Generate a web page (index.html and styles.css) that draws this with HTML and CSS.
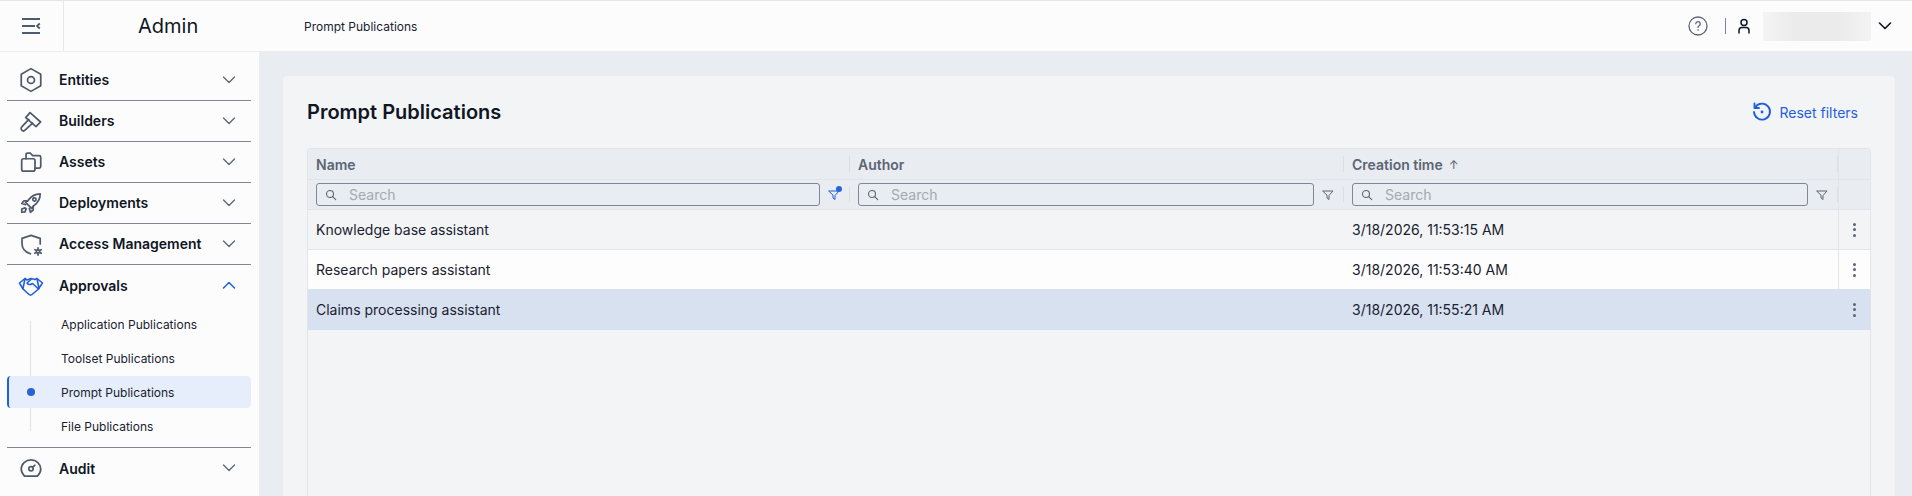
FILE: index.html
```html
<!DOCTYPE html>
<html lang="en">
<head>
<meta charset="utf-8">
<title>Prompt Publications</title>
<link rel="stylesheet" href="styles.css">
</head>
<body>
<header class="topbar">
  <div class="burger-cell">
    <svg class="ic-burger" viewBox="0 0 20 18" width="20" height="18"><path d="M1 2h18M1 9h13M1 16h18M18.800 6.500 16 9l2.800 2.500" /></svg>
  </div>
  <div class="app-name">Admin</div>
  <div class="crumb">Prompt Publications</div>
  <div class="top-right">
    <svg class="ic-help" viewBox="0 0 20 20" width="20" height="20"><circle cx="10" cy="10" r="9"/><path d="M7.800 7.800a2.200 2.200 0 1 1 3.400 1.900c-.8.500-1.200.9-1.200 1.700"/><circle class="dot" cx="10" cy="14" r=".8"/></svg>
    <span class="top-sep"></span>
    <svg class="ic-user" viewBox="0 0 14 16" width="14" height="16"><circle cx="7" cy="4.500" r="3"/><path d="M2 15v-2.500a3 3 0 0 1 3-3h4a3 3 0 0 1 3 3V15"/></svg>
    <span class="redacted"></span>
    <svg class="chev chev-dark" viewBox="0 0 14 8" width="14" height="8"><path d="M1.500 1 7 6.500 12.500 1"/></svg>
  </div>
</header>
<div class="shell">
  <nav class="sidebar">
    <div class="nav-item">
      <svg class="nav-ic" viewBox="0 0 24 24"><path d="M12 1.500 21 6.750V17.250L12 22.500 3 17.250V6.750z"/><circle cx="12" cy="12" r="3.200"/></svg>
      <span class="nav-label">Entities</span>
      <svg class="chev" viewBox="0 0 14 8" width="14" height="8"><path d="M1.500 1 7 6.500 12.500 1"/></svg>
    </div>
    <div class="nav-item">
      <svg class="nav-ic" viewBox="0 0 24 24"><path d="M7.100 8.900 11.100 4.300 20.900 12.900 16.600 17.200z"/><path d="M10 10.500 3.500 17.500a2.100 2.100 0 0 0 3 3L13.500 14"/></svg>
      <span class="nav-label">Builders</span>
      <svg class="chev" viewBox="0 0 14 8" width="14" height="8"><path d="M1.500 1 7 6.500 12.500 1"/></svg>
    </div>
    <div class="nav-item">
      <svg class="nav-ic" viewBox="0 0 24 24"><path d="M7.400 9V5.400a1.500 1.500 0 0 1 1.500-1.500h2.600l2 2.200h6a1.500 1.500 0 0 1 1.500 1.500V16.200a1.500 1.500 0 0 1-1.500 1.500H15.700"/><rect x="3.400" y="9" width="12.300" height="11.500" rx="1.800"/></svg>
      <span class="nav-label">Assets</span>
      <svg class="chev" viewBox="0 0 14 8" width="14" height="8"><path d="M1.500 1 7 6.500 12.500 1"/></svg>
    </div>
    <div class="nav-item">
      <svg class="nav-ic" viewBox="0 0 24 24"><path d="M20.500 3.500c-5 0-8.500 2-11.500 6.500l-2 1.500 5.500 5.500 1.500-2c4.500-3 6.500-6.500 6.500-11.500z"/><circle cx="15.200" cy="8.800" r="1.500"/><path d="M9 10H5.500L3.500 12.500l3.500 1M14 15v3.500L11.500 20.500l-1-3.500M6.500 16.500l-3 1 0 3 3-.3 1-3"/></svg>
      <span class="nav-label">Deployments</span>
      <svg class="chev" viewBox="0 0 14 8" width="14" height="8"><path d="M1.500 1 7 6.500 12.500 1"/></svg>
    </div>
    <div class="nav-item">
      <svg class="nav-ic" viewBox="0 0 24 24"><path d="M11.500 21C6.500 19.500 3.700 16 3.700 11.500V6.800L12 4l8.500 2.800V12"/><circle class="gear" cx="18.500" cy="18.900" r="1.500"/><path d="M18.500 15.600v1.400M18.500 20.800v1.400M15.600 17.200l1.300.8M20.100 19.800l1.300.8M15.600 20.600l1.300-.8M20.100 18l1.300-.8"/></svg>
      <span class="nav-label">Access Management</span>
      <svg class="chev" viewBox="0 0 14 8" width="14" height="8"><path d="M1.500 1 7 6.500 12.500 1"/></svg>
    </div>
    <div class="nav-group">
      <div class="nav-item nav-open">
        <svg class="nav-ic nav-ic-blue" viewBox="0 0 26 24"><path d="M1.500 10 7 5.500l2 1.500 4-1.500 4 1 2-1 5.500 4.500-4.500 6.500-6 5c-1 .8-2 .8-3 0l-6-5.500z"/><path d="M13 6.500 9 10c1.500 2 4 1.500 5.500.5l5.500 5M7 5.500l-2 10M19 5.500l2 10"/></svg>
        <span class="nav-label">Approvals</span>
        <svg class="chev chev-blue" viewBox="0 0 14 8" width="14" height="8"><path d="M1.500 7 7 1.500 12.500 7"/></svg>
      </div>
      <ul class="sub-list">
        <li class="sub-item">Application Publications</li>
        <li class="sub-item">Toolset Publications</li>
        <li class="sub-item sub-active"><span class="sub-dot"></span>Prompt Publications</li>
        <li class="sub-item">File Publications</li>
      </ul>
    </div>
    <div class="nav-item nav-last">
      <svg class="nav-ic" viewBox="0 0 24 24"><path d="M6 19.400C4 17.500 3 15.500 3 13a9 8.400 0 0 1 18 0c0 2.500-1 4.500-3 6.400z"/><circle cx="12" cy="12.700" r="2"/><path d="M13.500 11.200 15.500 9.500"/></svg>
      <span class="nav-label">Audit</span>
      <svg class="chev" viewBox="0 0 14 8" width="14" height="8"><path d="M1.500 1 7 6.500 12.500 1"/></svg>
    </div>
  </nav>
  <main class="main">
    <section class="card">
      <div class="card-head">
        <h1 class="title">Prompt Publications</h1>
        <div class="reset">
          <svg class="ic-reset" viewBox="0 0 20 20" width="20" height="20"><path d="M3.300 5.200A8 8 0 1 1 2 10"/><path d="M2.500 1.500v4.500H7"/><circle class="dot" cx="10" cy="10" r="1.400"/></svg>
          <span>Reset filters</span>
        </div>
      </div>
      <div class="table">
        <div class="row row-head">
          <div class="cell"><span class="col-title">Name</span></div>
          <div class="cell"><span class="col-title">Author</span></div>
          <div class="cell"><span class="col-title">Creation time</span><span class="sort">↑</span></div>
          <div class="cell cell-act"></div>
        </div>
        <div class="row row-filter">
          <div class="cell">
            <div class="search"><svg class="ic-search" viewBox="0 0 12 12" width="12" height="12"><circle cx="5" cy="5" r="3.500"/><path d="m7.700 7.700 3 3"/></svg><span>Search</span></div>
            <span class="fwrap"><svg class="ic-funnel on" viewBox="0 0 12 12" width="12" height="12"><path d="M1 2h10L7 6.500V10.500L5 9V6.500z"/></svg><span class="fdot"></span></span>
          </div>
          <div class="cell">
            <div class="search"><svg class="ic-search" viewBox="0 0 12 12" width="12" height="12"><circle cx="5" cy="5" r="3.500"/><path d="m7.700 7.700 3 3"/></svg><span>Search</span></div>
            <span class="fwrap"><svg class="ic-funnel" viewBox="0 0 12 12" width="12" height="12"><path d="M1 2h10L7 6.500V10.500L5 9V6.500z"/></svg></span>
          </div>
          <div class="cell">
            <div class="search"><svg class="ic-search" viewBox="0 0 12 12" width="12" height="12"><circle cx="5" cy="5" r="3.500"/><path d="m7.700 7.700 3 3"/></svg><span>Search</span></div>
            <span class="fwrap"><svg class="ic-funnel" viewBox="0 0 12 12" width="12" height="12"><path d="M1 2h10L7 6.500V10.500L5 9V6.500z"/></svg></span>
          </div>
          <div class="cell cell-act"></div>
        </div>
        <div class="row row-data">
          <div class="cell">Knowledge base assistant</div><div class="cell"></div><div class="cell">3/18/2026, 11:53:15 AM</div>
          <div class="cell cell-act"><span class="kebab"><i></i><i></i><i></i></span></div>
        </div>
        <div class="row row-data row-white">
          <div class="cell">Research papers assistant</div><div class="cell"></div><div class="cell">3/18/2026, 11:53:40 AM</div>
          <div class="cell cell-act"><span class="kebab"><i></i><i></i><i></i></span></div>
        </div>
        <div class="row row-data row-selected">
          <div class="cell">Claims processing assistant</div><div class="cell"></div><div class="cell">3/18/2026, 11:55:21 AM</div>
          <div class="cell cell-act"><span class="kebab"><i></i><i></i><i></i></span></div>
        </div>
      </div>
    </section>
  </main>
</div>
</body>
</html>
```
FILE: styles.css
```css
* { box-sizing: border-box; }
html, body { margin: 0; height: 100%; overflow: hidden; }
body { font-family: Inter, "Liberation Sans", sans-serif; color: #0f1624; background: #e9ecf0; width: 1912px; height: 496px; display: flex; flex-direction: column; }
svg { fill: none; stroke-linecap: round; stroke-linejoin: round; display: block; flex: none; }

.topbar { height: 52px; flex: none; display: flex; align-items: center; background: #fcfcfd; border-top: 1px solid #e1e5ee; border-bottom: 1px solid #eceef2; }
.burger-cell { width: 64px; height: 100%; display: flex; align-items: center; justify-content: center; border-right: 1px solid #e6e8ec; padding-right: 2px; }
.ic-burger { stroke: #4f5a6b; stroke-width: 1.800; stroke-linecap: butt; }
.app-name { margin-left: 74px; width: 166px; font-size: 20px; line-height: 24px; color: #0f1624; }
.crumb { font-size: 12px; color: #1a2130; }
.top-right { margin-left: auto; display: flex; align-items: center; height: 100%; padding-right: 20px; }
.ic-help { stroke: #5b6574; stroke-width: 1.300; }
.ic-help .dot { fill: #5b6574; stroke: none; }
.top-sep { width: 1px; height: 16px; background: #7a8494; margin: 0 11px 0 17px; }
.ic-user { stroke: #0f1624; stroke-width: 1.500; margin-right: 12px; }
.redacted { width: 108px; height: 29px; background: linear-gradient(90deg, #f4f4f4, #ebebeb 30%, #ebebeb 70%, #f3f3f3); margin-right: 7px; }
.chev { stroke: #5b6574; stroke-width: 1.300; }
.chev-dark { stroke: #0f1624; stroke-width: 1.600; }
.chev-blue { stroke: #1f5fdc; stroke-width: 1.500; }

.shell { flex: 1; display: flex; min-height: 0; }
.sidebar { width: 259px; flex: none; background: #fcfcfd; padding: 8px 8px 0 7px; }
.nav-item { height: 41px; display: flex; align-items: center; padding: 0 15px 1px 11px; border-bottom: 1px solid #7d8797; }
.nav-group { border-bottom: 1px solid #7d8797; }
.nav-open { border-bottom: 0; }
.nav-last { border-bottom: 0; }
.nav-ic { width: 26px; height: 26px; stroke: #4f5a6b; stroke-width: 1.600; }
.gear { stroke-width: 1.500; }
.nav-ic-blue { stroke: #1f5fdc; }
.nav-label { margin-left: 15px; flex: 1; font-size: 14px; font-weight: 600; color: #0f1624; }
.sub-list { list-style: none; margin: 0; padding: 1px 0 4px; position: relative; }
.sub-list::before { content: ""; position: absolute; left: 23px; top: 15px; bottom: 16px; width: 1px; background: #dfe2e9; }
.sub-item { height: 34px; display: flex; align-items: center; padding-left: 54px; font-size: 12px; color: #1a2130; position: relative; }
.sub-active { height: 32px; margin: 1px 0; background: #e6eefb; border-left: 2px solid #1f5fdc; border-radius: 4px; padding-left: 52px; }
.sub-dot { position: absolute; left: 18px; top: 12px; width: 8px; height: 8px; border-radius: 50%; background: #2a62d9; }

.main { flex: 1; min-width: 0; padding: 24px 17px 0 24px; }
.card { height: 100%; background: #f3f4f6; border-radius: 4px 4px 0 0; padding: 0 24px; display: flex; flex-direction: column; }
.card-head { height: 72px; flex: none; display: flex; align-items: center; justify-content: space-between; }
.title { margin: 0; font-size: 20px; line-height: 24px; font-weight: 600; color: #0f1624; }
.reset { display: flex; align-items: center; gap: 8px; font-size: 14px; color: #1f5fdc; margin-right: 13px; }
.ic-reset { stroke: #1f5fdc; stroke-width: 1.900; }
.ic-reset .dot { fill: #1f5fdc; stroke: none; }

.table { flex: 1; border: 1px solid #e1e4e9; border-bottom: 0; border-radius: 4px 4px 0 0; }
.row { display: grid; grid-template-columns: 542px 494px 494px 1fr; }
.cell { display: flex; align-items: center; padding: 0 8px; min-width: 0; font-size: 14px; color: #1a2130; }
.row-head { height: 31px; background: #e9ecf0; border-bottom: 1px solid #e1e4e9; }
.row-head .cell, .row-filter .cell { position: relative; }
.row-head .cell::after, .row-filter .cell::after { content: ""; position: absolute; right: 0; top: 7px; bottom: 7px; width: 1px; background: #dcdfe5; }
.row-head .cell-act::after, .row-filter .cell-act::after { display: none; }
.row-head .cell-act, .row-filter .cell-act { box-shadow: inset 1px 0 0 #e1e4e9; }
.col-title { font-size: 14px; font-weight: 600; color: #5b6574; }
.sort { margin-left: 6px; font-size: 12px; color: #5b6574; }
.row-filter { height: 30px; background: #e9ecf0; border-bottom: 1px solid #e1e4e9; }
.search { flex: 1; height: 23px; border: 1px solid #7d8797; border-radius: 3px; display: flex; align-items: center; padding-left: 8px; font-size: 14px; color: #a3a9b4; min-width: 0; }
.search span { margin-left: 12px; }
.ic-search { stroke: #5b6574; stroke-width: 1.100; }
.fwrap { position: relative; width: 12px; height: 12px; margin: 0 2px 0 8px; }
.ic-funnel { stroke: #5b6574; stroke-width: 1; }
.ic-funnel.on { stroke: #1f5fdc; }
.fdot { position: absolute; right: -2px; top: -3px; width: 6px; height: 6px; border-radius: 50%; background: #2a62d9; }
.row-data { height: 40px; border-bottom: 1px solid #e1e4e9; }
.row-data .cell-act { box-shadow: inset 1px 0 0 #e1e4e9; justify-content: center; padding: 0; }
.row-white { background: #fdfdfd; border-bottom: 0; height: 39px; }
.row-selected { background: #d8e1f0; border-bottom: 0; height: 41px; }
.row-selected .cell-act { box-shadow: none; }
.kebab { display: flex; flex-direction: column; gap: 2.500px; }
.kebab i { width: 3px; height: 3px; border-radius: 50%; background: #5b6574; display: block; }
```
